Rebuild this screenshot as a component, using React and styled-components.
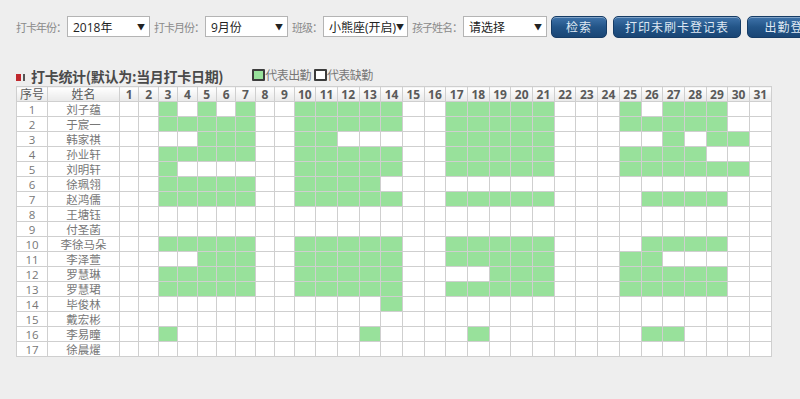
import React from 'react';
import styled, { createGlobalStyle } from 'styled-components';

const GlobalStyle = createGlobalStyle`
  html, body {
    margin: 0;
    padding: 0;
    background: #eeeeee;
    overflow: hidden;
  }
  body {
    font-family: "Open Sans", "Noto Sans CJK SC", sans-serif;
    color: #555;
  }
`;

const Page = styled.div`
  padding: 16px 0 0 16px;
  width: 800px;
  box-sizing: border-box;
`;

const Toolbar = styled.div`
  display: flex;
  align-items: center;
  white-space: nowrap;
  height: 21px;
`;

const Label = styled.span`
  flex: none;
  font-family: "Noto Sans CJK SC", sans-serif;
  font-size: 11px;
  color: #8a8a8a;
  letter-spacing: -1px;
  margin-right: 1px;
`;

const Select = styled.div`
  flex: none;
  display: flex;
  align-items: center;
  justify-content: space-between;
  box-sizing: border-box;
  width: ${p => p.$w}px;
  height: 21px;
  padding: 0 4px 0 5px;
  margin-right: 4px;
  background: #fff;
  border: 1px solid #b4b4b4;
  font-family: "Open Sans", "Noto Sans CJK SC", sans-serif;
  font-size: 12px;
  color: #222;
`;

const Arrow = styled.span`
  font-size: 8px;
  color: #222;
`;

const Button = styled.button`
  flex: none;
  box-sizing: border-box;
  width: ${p => p.$w}px;
  height: 22px;
  margin-left: ${p => p.$ml}px;
  padding: 0;
  border: 1px solid #163c66;
  border-radius: 5px;
  background: linear-gradient(#3f73aa, #235588 50%, #1a4675);
  box-shadow: inset 0 1px 0 rgba(255, 255, 255, 0.35);
  color: #dfe8f3;
  font-family: "Noto Sans CJK SC", sans-serif;
  font-size: 12px;
  letter-spacing: 1px;
`;

const TitleRow = styled.div`
  display: flex;
  align-items: flex-end;
  margin-top: 29px;
  height: 20px;
`;

const TitleIcon = styled.span`
  display: flex;
  gap: 2px;
  margin: 0 6px 5px 0;

  &::before {
    content: '';
    width: 5px;
    height: 7px;
    background: #c0282d;
  }
  &::after {
    content: '';
    width: 2px;
    height: 7px;
    background: #555;
  }
`;

const Title = styled.h2`
  margin: 0;
  font-family: "Noto Sans CJK SC", sans-serif;
  font-size: 14px;
  font-weight: bold;
  letter-spacing: -0.3px;
  color: #4a4a4a;
  line-height: 20px;
`;

const Legend = styled.span`
  display: flex;
  align-items: center;
  margin: 0 0 3px ${p => p.$ml}px;
  font-family: "Noto Sans CJK SC", sans-serif;
  font-size: 12px;
  letter-spacing: -0.6px;
  color: #777;
`;

const Swatch = styled.span`
  display: inline-block;
  box-sizing: border-box;
  width: 13px;
  height: 12px;
  border: 2px solid #3c3c3c;
  border-radius: 1px;
  background: ${p => (p.$on ? '#98e19b' : '#fff')};
`;

const Table = styled.table`
  border-collapse: collapse;
  table-layout: fixed;
  width: 755px;
  background: #fff;
  font-size: 12px;
`;

const HeadCell = styled.th`
  height: 14px;
  padding: 0;
  border: 1px solid #cfcfcf;
  background: linear-gradient(#ffffff, #e9e9e9);
  color: #5a5a5a;
  font-weight: ${p => (p.$plain ? 'normal' : 'bold')};
  font-family: "Open Sans", "Noto Sans CJK SC", sans-serif;
  line-height: 13px;
  text-align: center;
`;

const Cell = styled.td`
  height: 14px;
  padding: 0;
  border: 1px solid #cfcfcf;
  background: ${p => (p.$on ? '#98e19b' : '#fff')};
  color: #777;
  font-family: "Open Sans", "Noto Sans CJK SC", sans-serif;
  font-size: 11.5px;
  line-height: 13px;
  text-align: center;
  white-space: nowrap;
  overflow: hidden;
`;

const range = (a, b) => Array.from({ length: b - a + 1 }, (_, i) => a + i);

const rows = [
  ['刘子蕴', [3, 5, 7, ...range(10, 14), ...range(17, 21), 25, 27, 28, 29]],
  ['于宸一', [...range(3, 7), ...range(10, 14), ...range(17, 21), ...range(25, 29)]],
  ['韩家祺', [5, 6, 7, 10, 11, ...range(17, 21), 27, 29, 30]],
  ['孙业轩', [...range(3, 7), ...range(10, 14), ...range(17, 21), ...range(25, 28)]],
  ['刘明轩', [3, ...range(10, 14), ...range(17, 21), ...range(25, 30)]],
  ['徐珮翎', [...range(3, 7), ...range(10, 13)]],
  ['赵鸿儒', [...range(3, 7), ...range(10, 14), ...range(17, 21), ...range(26, 29)]],
  ['王塘钰', []],
  ['付圣菡', []],
  ['李徐马朵', [...range(3, 7), ...range(10, 14), ...range(17, 21), ...range(26, 29)]],
  ['李泽萱', [5, 6, 7, ...range(10, 14), ...range(17, 21), 25, 26]],
  ['罗慧琳', [...range(3, 7), ...range(10, 14), 19, 20, 21, ...range(25, 29)]],
  ['罗慧珺', [...range(3, 7), ...range(10, 14), ...range(17, 21), ...range(25, 29)]],
  ['毕俊林', [14]],
  ['戴宏彬', []],
  ['李易瞳', [3, 13, 18, 26, 27]],
  ['徐晨燿', []],
];

const days = range(1, 31);

export default function App() {
  return (
    <Page>
      <GlobalStyle />
      <Toolbar>
        <Label>打卡年份：</Label>
        <Select $w={83}>2018年<Arrow>▼</Arrow></Select>
        <Label>打卡月份：</Label>
        <Select $w={83}>9月份<Arrow>▼</Arrow></Select>
        <Label>班级：</Label>
        <Select $w={85}>小熊座(开启)<Arrow>▼</Arrow></Select>
        <Label>孩子姓名：</Label>
        <Select $w={84}>请选择<Arrow>▼</Arrow></Select>
        <Button $w={56} $ml={0}>检索</Button>
        <Button $w={128} $ml={6}>打印未刷卡登记表</Button>
        <Button $w={100} $ml={6}>出勤登记表</Button>
      </Toolbar>

      <TitleRow>
        <TitleIcon />
        <Title>打卡统计(默认为:当月打卡日期)</Title>
        <Legend $ml={29}><Swatch $on />代表出勤</Legend>
        <Legend $ml={3}><Swatch />代表缺勤</Legend>
      </TitleRow>

      <Table>
        <colgroup>
          <col style={{ width: 31 }} />
          <col style={{ width: 72 }} />
          {days.map(d => (
            <col key={d} style={{ width: d < 10 ? 19.4 : 21.7 }} />
          ))}
        </colgroup>
        <thead>
          <tr>
            <HeadCell $plain>序号</HeadCell>
            <HeadCell $plain>姓名</HeadCell>
            {days.map(d => (
              <HeadCell key={d}>{d}</HeadCell>
            ))}
          </tr>
        </thead>
        <tbody>
          {rows.map(([name, on], i) => (
            <tr key={name}>
              <Cell>{i + 1}</Cell>
              <Cell>{name}</Cell>
              {days.map(d => (
                <Cell key={d} $on={on.includes(d)} />
              ))}
            </tr>
          ))}
        </tbody>
      </Table>
    </Page>
  );
}
